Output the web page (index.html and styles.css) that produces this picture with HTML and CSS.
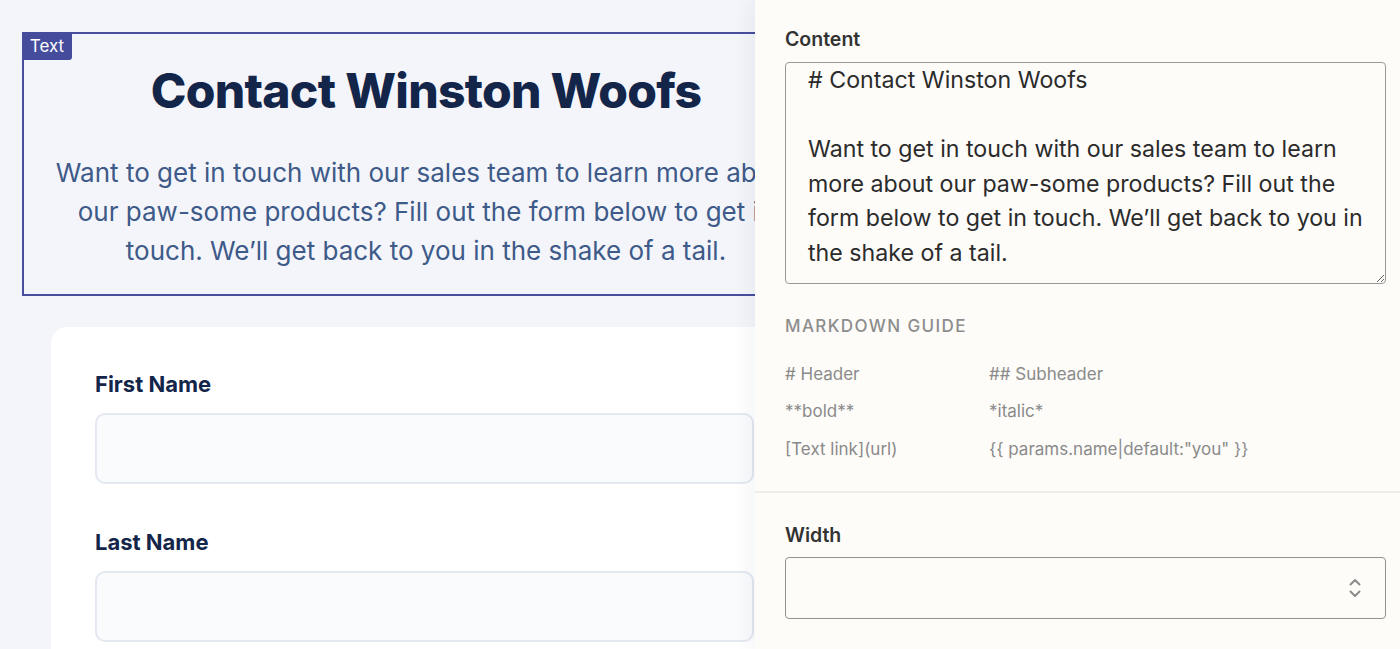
FILE: index.html
```html
<!DOCTYPE html>
<html lang="en">
<head>
<meta charset="utf-8">
<title>Contact Winston Woofs – Editor</title>
<link rel="stylesheet" href="styles.css">
</head>
<body>
<div class="app">
  <main class="preview">
    <section class="text-block">
      <span class="badge">Text</span>
      <h1 class="title">Contact Winston Woofs</h1>
      <p class="lead">Want to get in touch with our sales team to learn more about our paw-some products? Fill out the form below to get in touch. We’ll get back to you in the shake of a tail.</p>
    </section>
    <section class="form-card">
      <div class="field">
        <label class="field-label">First Name</label>
        <div class="field-input"></div>
      </div>
      <div class="field">
        <label class="field-label">Last Name</label>
        <div class="field-input"></div>
      </div>
    </section>
  </main>
  <aside class="panel">
    <div class="panel-section content-section">
      <label class="panel-label">Content</label>
      <textarea class="content-area" spellcheck="false"># Contact Winston Woofs

Want to get in touch with our sales team to learn
more about our paw-some products? Fill out the
form below to get in touch. We’ll get back to you in
the shake of a tail.</textarea>
      <div class="guide-title">Markdown Guide</div>
      <div class="guide">
        <span># Header</span><span>## Subheader</span>
        <span>**bold**</span><span>*italic*</span>
        <span>[Text link](url)</span><span>{{ params.name|default:"you" }}</span>
      </div>
    </div>
    <div class="panel-section width-section">
      <label class="panel-label">Width</label>
      <div class="select">
        <svg class="chev" width="12" height="22" viewBox="0 0 12 22" aria-hidden="true">
          <path d="M1.5 7.5 L6 3 L10.5 7.5" fill="none" stroke="#8c8c8c" stroke-width="2" stroke-linecap="round" stroke-linejoin="round"/>
          <path d="M1.5 14.5 L6 19 L10.5 14.5" fill="none" stroke="#8c8c8c" stroke-width="2" stroke-linecap="round" stroke-linejoin="round"/>
        </svg>
      </div>
    </div>
  </aside>
</div>
</body>
</html>
```

FILE: styles.css
```css
* { box-sizing: border-box; }
html, body { margin: 0; padding: 0; height: 100%; }
body { font-family: Inter, "Noto Sans", sans-serif; background: #f3f5fa; overflow: hidden; }

.app { display: flex; height: 649px; width: 1400px; }

.preview {
  width: 755px;
  flex: 0 0 755px;
  overflow: hidden;
  background: #f3f5fa;
  padding: 32px 0 0 22px;
}

.text-block {
  position: relative;
  width: 808px;
  height: 264px;
  border: 2px solid #474e9e;
  padding: 22px 28px 0;
  text-align: center;
}
.badge {
  position: absolute;
  left: -2px; top: -2px;
  width: 50px; height: 28px;
  background: #454c9b;
  color: #fff;
  font-size: 17px;
  line-height: 28px;
  text-align: center;
  border-bottom-right-radius: 3px;
}
.title {
  margin: 0;
  font-size: 48px;
  font-weight: 800;
  line-height: 70px;
  letter-spacing: -0.7px;
  color: #14254a;
}
.lead {
  margin: 27px 0 0;
  font-size: 26px;
  line-height: 39px;
  color: #3e5a89;
}

.form-card {
  margin: 31px 0 0 29px;
  width: 747px;
  height: 400px;
  background: #fff;
  border-radius: 16px;
  padding: 44px 44px 0 44px;
  display: flex;
  flex-direction: column;
  gap: 45px;
}
.field { display: flex; flex-direction: column; gap: 16px; }
.field-label {
  font-size: 22px;
  line-height: 26px;
  font-weight: 700;
  color: #14254a;
}
.field-input {
  height: 71px;
  width: 659px;
  border: 2px solid #e3e8f1;
  border-radius: 10px;
  background: #fafbfd;
}

.panel {
  flex: 1;
  background: #fdfcf9;
  position: relative;
  z-index: 1;
  box-shadow: -6px 0 18px rgba(20, 30, 60, 0.05);
}
.panel-section { padding: 0 14px 0 30px; }
.content-section { padding-top: 27px; padding-bottom: 23px; border-bottom: 2px solid #eeede9; }
.panel-label {
  display: block;
  font-size: 19.5px;
  line-height: 24px;
  font-weight: 600;
  color: #333;
}
.content-area {
  display: block;
  margin-top: 11px;
  width: 601px;
  height: 222px;
  border: 1px solid #9a9a9a;
  border-radius: 4px;
  background: #fdfcf9;
  padding: 0 10px 0 22px;
  font-family: Inter, "Noto Sans", sans-serif;
  font-size: 23.2px;
  line-height: 34.6px;
  color: #2b2b2b;
  white-space: pre;
  overflow: hidden;
  outline: none;
  resize: both;
}
.guide-title {
  margin-top: 32px;
  font-size: 17px;
  line-height: 20px;
  font-weight: 500;
  letter-spacing: 1.4px;
  text-transform: uppercase;
  color: #8d8d8d;
}
.guide {
  margin-top: 19px;
  display: grid;
  grid-template-columns: 204px 1fr;
  grid-auto-rows: 37.5px;
  align-items: center;
  font-size: 17px;
  color: #8a8a8a;
}

.width-section { padding-top: 30px; }
.select {
  margin-top: 10px;
  width: 601px;
  height: 62px;
  border: 1px solid #929292;
  border-radius: 4px;
  display: flex;
  align-items: center;
  justify-content: flex-end;
  padding-right: 24px;
}
.chev { display: block; }
```
